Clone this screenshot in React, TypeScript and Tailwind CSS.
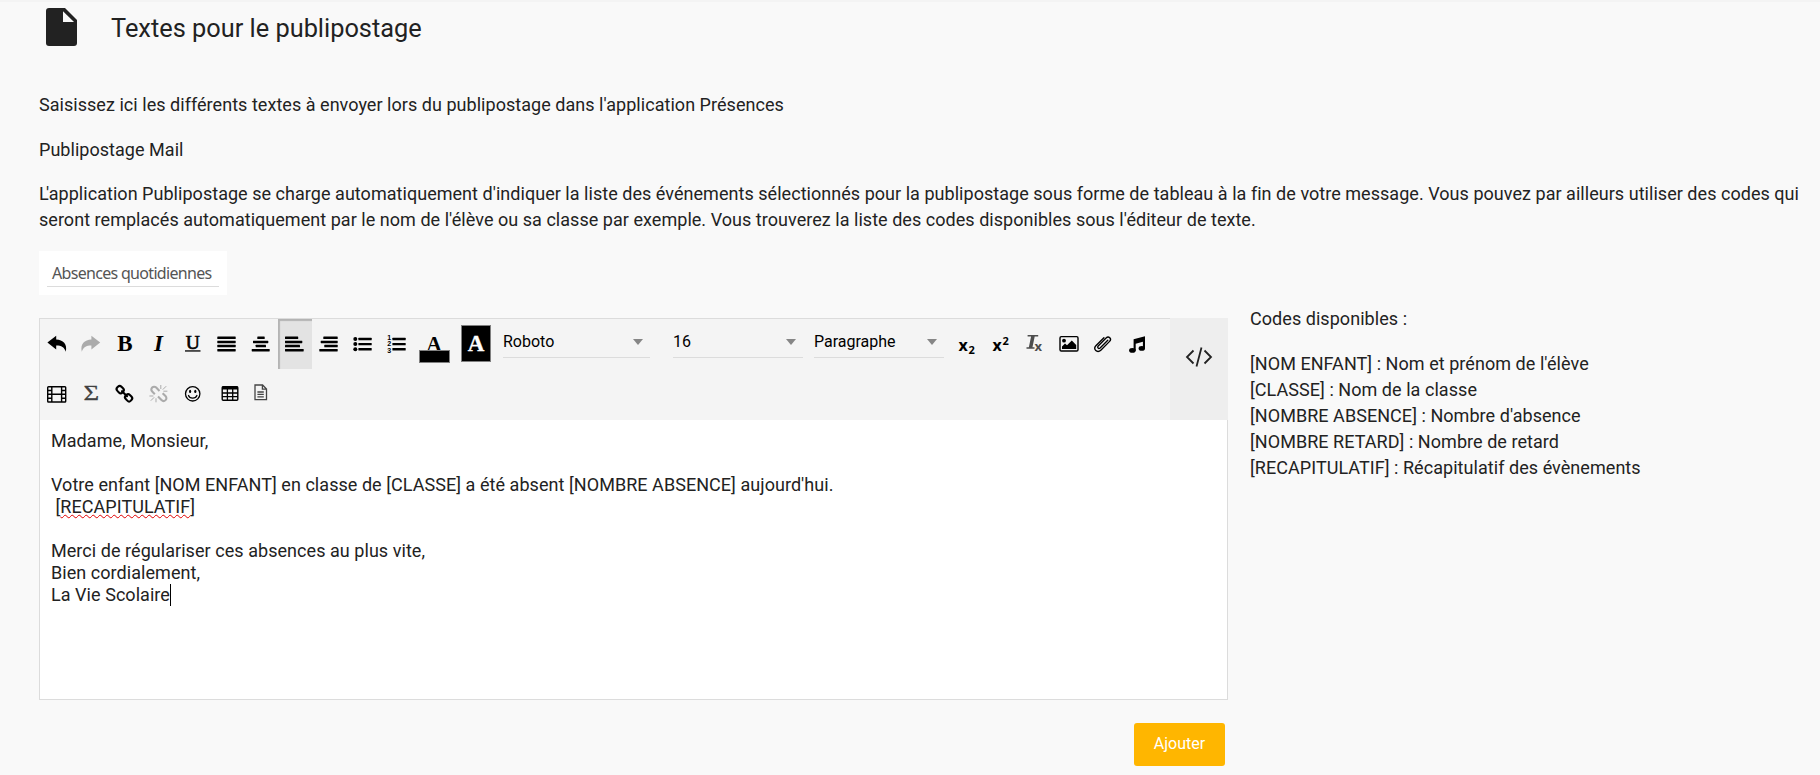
import type { ReactNode } from 'react';

function Cell({ children, active = false, muted = false }: { children: ReactNode; active?: boolean; muted?: boolean }) {
  return (
    <button
      className={`block h-[50px] w-[34px] shrink-0 ${
        active ? 'bg-[#e3e3e3] shadow-[inset_2px_2px_1px_#b4b4b4]' : ''
      } ${muted ? 'text-[#ababab]' : 'text-black'}`}
    >
      <svg viewBox="0 0 34 50" width="34" height="50" fill="currentColor">
        {children}
      </svg>
    </button>
  );
}

function Bars({ rows }: { rows: [number, number][] }) {
  return (
    <>
      {rows.map(([x1, x2], i) => (
        <rect key={i} x={x1} y={17.6 + i * 4.1} width={x2 - x1} height="2.5" rx="0.4" />
      ))}
    </>
  );
}

const curvedArrow = 'M7.4 23.5 16.2 16.8v3.7C23 20.7 27.6 25 25.8 32.8 24.4 28.4 21.5 26.6 16.2 26.6v3.8Z';

function Select({ label, className }: { label: string; className: string }) {
  return (
    <div className={`flex h-[39px] items-center justify-between border-b border-[#dcdcdc] pr-[7px] pt-[8px] text-[16px] leading-[20px] ${className}`}>
      <span>{label}</span>
      <svg width="10" height="6" viewBox="0 0 10 6" fill="#868686">
        <path d="M0 0h10L5 6Z" />
      </svg>
    </div>
  );
}

function Toolbar() {
  return (
    <div className="flex h-[101px] flex-1 flex-col bg-[#f4f4f4] tracking-normal text-black">
      <div className="flex h-[50px]">
        <Cell><path d={curvedArrow} /></Cell>
        <Cell muted><path d={curvedArrow} transform="translate(33.6 0) scale(-1 1)" /></Cell>
        <Cell><text x="17" y="32" textAnchor="middle" className="font-['Liberation_Serif',serif] text-[23px] font-bold">B</text></Cell>
        <Cell><text x="16.5" y="32" textAnchor="middle" className="font-['Liberation_Serif',serif] text-[23px] font-bold italic">I</text></Cell>
        <Cell>
          <text x="16.8" y="29.6" textAnchor="middle" stroke="currentColor" strokeWidth="0.7" className="font-['Liberation_Serif',serif] text-[19.5px]">U</text>
          <rect x="9" y="31.3" width="15.5" height="1.3" />
        </Cell>
        <Cell><Bars rows={[[7.3, 25.7], [7.3, 25.7], [7.3, 25.7], [7.3, 25.7]]} /></Cell>
        <Cell><Bars rows={[[13.3, 20.7], [9, 24.3], [11.7, 22], [7.7, 25.7]]} /></Cell>
        <Cell active><Bars rows={[[7, 20.2], [7, 24.3], [7, 22], [7, 25.7]]} /></Cell>
        <Cell><Bars rows={[[11.3, 25.7], [8.7, 25.7], [12.3, 25.7], [7.3, 25.7]]} /></Cell>
        <Cell>
          {[20, 25.1, 30.3].map((y) => (
            <g key={y}>
              <circle cx="9.3" cy={y} r="2" />
              <rect x="12.4" y={y - 1.2} width="13.3" height="2.4" rx="0.5" />
            </g>
          ))}
        </Cell>
        <Cell>
          {[20, 25.1, 30.3].map((y, i) => (
            <g key={y}>
              <text x="9.3" y={y + 1.2 + i * 1} textAnchor="middle" className="font-['Liberation_Sans',sans-serif] text-[7px] font-bold">{i + 1}</text>
              <rect x="12.4" y={y - 1.2} width="13.3" height="2.4" rx="0.5" />
            </g>
          ))}
        </Cell>
        <button className="block h-[50px] w-[42px] shrink-0">
          <svg viewBox="0 0 42 50" width="42" height="50">
            <text x="20" y="32" textAnchor="middle" className="font-['Liberation_Serif',serif] text-[21px] font-bold">A</text>
            <rect x="5.5" y="31.5" width="30" height="12" stroke="#808080" />
          </svg>
        </button>
        <button className="block h-[50px] w-[47px] shrink-0">
          <svg viewBox="0 0 47 50" width="47" height="50">
            <rect x="5.5" y="6.5" width="29" height="36" stroke="#808080" />
            <text x="20" y="32.3" textAnchor="middle" fill="#fff" stroke="#fff" strokeWidth="0.3" className="font-['Liberation_Serif',serif] text-[23px] font-bold">A</text>
          </svg>
        </button>
        <Select label="Roboto" className="w-[147px]" />
        <Select label="16" className="ml-[23px] w-[130px]" />
        <Select label="Paragraphe" className="ml-[11px] mr-[6px] w-[130px]" />
        <Cell>
          <text x="8.5" y="32" className="font-['Open_Sans',sans-serif] text-[16px] font-bold">x</text>
          <text x="18.6" y="34.6" className="font-['Open_Sans',sans-serif] text-[11px] font-bold">2</text>
        </Cell>
        <Cell>
          <text x="8.5" y="32" className="font-['Open_Sans',sans-serif] text-[16px] font-bold">x</text>
          <text x="18.6" y="26" className="font-['Open_Sans',sans-serif] text-[11px] font-bold">2</text>
        </Cell>
        <Cell>
          <g fill="#4d4d4d">
            <path d="M9.6 16h10.6v1.5H9.6ZM13.2 17h3.6L14.4 28.6h-3.6ZM8.5 28.3h8v1.5h-8Z" />
            <text x="16.6" y="32" className="font-['Open_Sans',sans-serif] text-[13px] font-bold">x</text>
          </g>
        </Cell>
        <Cell>
          <rect x="8" y="17.6" width="18" height="14.4" rx="1.3" fill="none" stroke="currentColor" strokeWidth="1.4" />
          <circle cx="12" cy="21.7" r="1.9" />
          <path d="M10 30v-2.5l3-3 2 1.8 4.8-4.8L24.2 26v4Z" />
        </Cell>
        <Cell>
          <path
            d="M21.8 21.2l-7.7 7.7c-1.5 1.4-3.3-.4-1.9-1.9l7.9-8c2.6-2.6 6 .8 3.5 3.4l-8.8 8.8c-3.6 3.6-8.2-1.1-4.7-4.7l7.8-7.8"
            fill="none" stroke="currentColor" strokeWidth="1.35" strokeLinecap="round"
          />
        </Cell>
        <Cell>
          <path d="M13.6 20.3 25 17.3v12.3h-2.1v-6.8l-7.2 2v7h-2.1Z" />
          <ellipse cx="12.4" cy="31.4" rx="3.3" ry="2.3" />
          <ellipse cx="21.8" cy="29.4" rx="3.2" ry="2.3" />
        </Cell>
      </div>
      <div className="flex h-[50px]">
        <Cell>
          <g fill="none" stroke="currentColor" strokeWidth="1.4">
            <rect x="7.7" y="17.7" width="18" height="15.3" rx="0.8" />
            <path d="M11.8 17.7V33M21.6 17.7V33M11.8 25.3h9.8M7.7 21.5h4.1M7.7 25.3h4.1M7.7 29.2h4.1M21.6 21.5h4.1M21.6 25.3h4.1M21.6 29.2h4.1" />
          </g>
        </Cell>
        <Cell>
          <text x="0" y="31" textAnchor="middle" transform="translate(17.2 0) scale(1.22 1)" fill="#404040" stroke="#404040" strokeWidth="0.3" className="font-['Liberation_Serif',serif] text-[22px]">Σ</text>
        </Cell>
        <Cell>
          <g fill="none" stroke="currentColor" strokeWidth="2.1">
            <rect x="8.6" y="17.7" width="7.2" height="5.8" rx="2.5" transform="rotate(45 12.2 20.6)" />
            <rect x="17" y="25.9" width="7.2" height="5.8" rx="2.5" transform="rotate(45 20.6 28.8)" />
            <path d="m14 22.2 5 5" strokeLinecap="round" />
          </g>
        </Cell>
        <Cell muted>
          <g fill="none" stroke="currentColor" strokeWidth="2.1">
            <path d="m12.8 25.2-2.6-2.6c-2.7-2.7 1.3-6.7 4-4l3.3 3.4M20.6 24.2l2.9 2.9c2.7 2.7-1.3 6.7-4 4l-3.5-3.6" />
            <path d="M18.8 16v4M24.2 17.2l-3.4 3.4M25.4 22.2h-4M14 29.3v4M12.2 28.3l-3.4 3.4M11.4 27h-4" strokeWidth="1" />
          </g>
        </Cell>
        <Cell>
          <circle cx="16.7" cy="24.8" r="7.2" fill="none" stroke="currentColor" strokeWidth="1.3" />
          <ellipse cx="14.1" cy="22.4" rx="1.1" ry="1.6" />
          <ellipse cx="19.3" cy="22.4" rx="1.1" ry="1.6" />
          <path d="M12.5 26.5c1.2 3.5 7.2 3.5 8.4 0" fill="none" stroke="currentColor" strokeWidth="1.3" strokeLinecap="round" />
        </Cell>
        <Cell>
          <rect x="12.2" y="17.8" width="15.6" height="13.4" rx="1" fill="none" stroke="currentColor" strokeWidth="1.4" />
          <path d="M12 17.5h16v3H12Z" />
          <path d="M17.4 20v11M22.7 20v11M12 24h16M12 27.6h16" fill="none" stroke="currentColor" strokeWidth="1.3" />
        </Cell>
        <Cell>
          <g fill="none" stroke="#444" strokeWidth="1.3">
            <path d="M11 16h7.6l3.9 4v10.7H11ZM18.4 16v4.2h4" />
            <path d="M13.4 23h6.4M13.4 25.4h6.4M13.4 27.8h6.4" />
          </g>
        </Cell>
      </div>
    </div>
  );
}

export default function App() {
  return (
    <main className="h-[775px] overflow-hidden bg-[#f9f9f9] font-[Roboto,sans-serif] text-[18px] leading-[26px] tracking-[0.038px] text-[#222]">
      <div className="h-[2px] bg-[#f4f4f4]" />
      <header className="flex h-[50px] items-center pl-[46px]">
        <svg width="31" height="38" viewBox="0 0 31 38" fill="#222">
          <path d="M3 0h16L31 12v23a3 3 0 0 1-3 3H3a3 3 0 0 1-3-3V3a3 3 0 0 1 3-3Z" />
          <path d="M17 3.2 28 14H17Z" fill="#f9f9f9" />
        </svg>
        <h1 className="ml-[34px] pt-[2px] text-[25.35px] leading-[32px] tracking-normal">Textes pour le publipostage</h1>
      </header>

      <div className="pl-[39px] pt-[40px]">
        <p className="h-[45px]">Saisissez ici les différents textes à envoyer lors du publipostage dans l'application Présences</p>
        <p className="h-[44px]">Publipostage Mail</p>
        <p className="w-[1775px] whitespace-nowrap">
          <span className="tracking-[-2.7px]">L</span>'application Publipostage se charge automatiquement d'indiquer la liste des événements sélectionnés pour la publipostage sous forme de tableau à la fin de votre message. Vous pouvez par ailleurs utiliser des codes qui
          <br />
          seront remplacés automatiquement par le nom de l'élève ou sa classe par exemple. Vous trouverez la liste des codes disponibles sous l'éditeur de texte.
        </p>

        <div className="mt-[18px] h-[44px] w-[188px] bg-white px-2 pt-[10px]">
          <div className="h-[26px] whitespace-nowrap border-b border-[#dcdcdc] pl-[5px] font-['Noto_Sans',sans-serif] text-[16px] leading-[25px] tracking-[-0.69px] text-[#555]">
            Absences quotidiennes
          </div>
        </div>

        <div className="mt-[23px] flex items-start">
          <div className="w-[1189px]">
            <section className="h-[382px] border border-[#dcdcdc] bg-white">
              <div className="flex">
                <Toolbar />
                <button className="-mr-px -mt-px flex h-[102px] w-[58px] justify-center bg-[#eee] pt-[29px]">
                  <svg width="28" height="20" viewBox="0 0 28 20" fill="none" stroke="#222" strokeWidth="1.8">
                    <path d="M8.5 3.5 2 10l6.5 6.5M19.5 3.5 26 10l-6.5 6.5M16.5.4l-5 19.2" />
                  </svg>
                </button>
              </div>
              <div className="pl-[11px] pt-[10px] leading-[22px] tracking-[0.05px]">
                <p>Madame, Monsieur,</p>
                <br />
                <p>Votre enfant [NOM ENFANT] en classe de [CLASSE] a été absent [NOMBRE ABSENCE] aujourd'hui.</p>
                <p className="flex whitespace-pre">
                  {' ['}
                  <span className="underline decoration-[#e00000] decoration-wavy decoration-1 underline-offset-[1px] [text-decoration-skip-ink:none]">RECAPITULATIF</span>]
                </p>
                <br />
                <p>Merci de régulariser ces absences au plus vite,</p>
                <p>Bien cordialement,</p>
                <p className="flex">La Vie Scolaire<span className="h-[22px] w-px bg-black" /></p>
              </div>
            </section>
            <div className="flex justify-end pr-[3px] pt-[23px]">
              <button className="h-[43px] w-[91px] rounded-[3px] bg-[#ffb600] pb-[2px] text-[16px] leading-[20px] text-white">Ajouter</button>
            </div>
          </div>
          <aside className="-mt-[12px] ml-[22px] tracking-[0.05px]">
            <p className="h-[44.5px]">Codes disponibles :</p>
            <div className="leading-[26.2px]">
              <p>[NOM ENFANT] : Nom et prénom de l'élève</p>
              <p>[CLASSE] : Nom de la classe</p>
              <p>[NOMBRE ABSENCE] : Nombre d'absence</p>
              <p>[NOMBRE RETARD] : Nombre de retard</p>
              <p>[RECAPITULATIF] : Récapitulatif des évènements</p>
            </div>
          </aside>
        </div>
      </div>
    </main>
  );
}
